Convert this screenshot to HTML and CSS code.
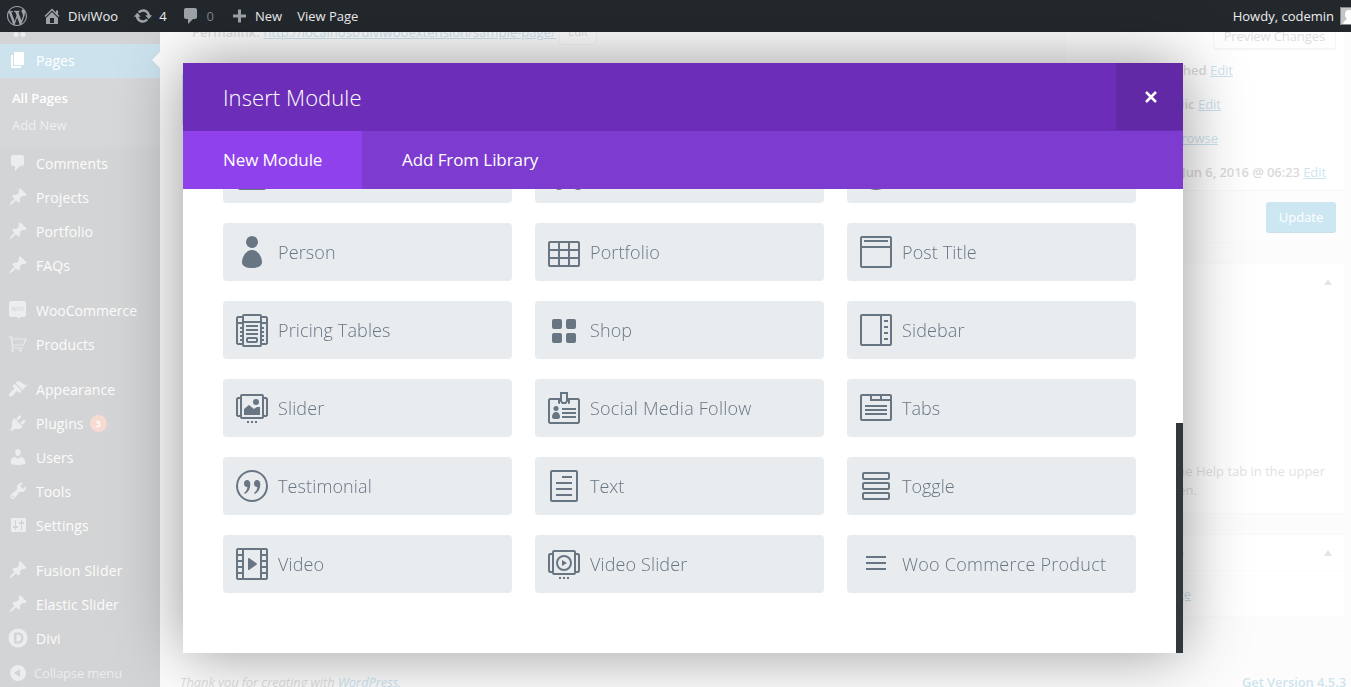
FILE: index.html
```html
<!DOCTYPE html>
<html lang="en">
<head>
<meta charset="utf-8">
<title>Edit Page - DiviWoo</title>
<link rel="stylesheet" href="styles.css">
</head>
<body>
<svg class="sprite" aria-hidden="true">
  <symbol id="wp" viewBox="0 0 20 20"><path d="M20 10c0-5.51-4.49-10-10-10C4.48 0 0 4.49 0 10c0 5.52 4.48 10 10 10 5.51 0 10-4.48 10-10zM7.78 15.37L4.37 6.22c.55-.02 1.17-.08 1.17-.08.5-.06.44-1.13-.06-1.11 0 0-1.45.11-2.37.11-.18 0-.37 0-.58-.01C4.12 2.69 6.87 1.11 10 1.11c2.33 0 4.45.87 6.05 2.34-.68-.11-1.65.39-1.65 1.58 0 .74.45 1.36.9 2.1.35.61.55 1.36.55 2.46 0 1.49-1.4 5-1.4 5l-3.03-8.37c.54-.02.82-.17.82-.17.5-.05.44-1.25-.06-1.22 0 0-1.44.12-2.38.12-.87 0-2.33-.12-2.33-.12-.5-.03-.56 1.2-.06 1.22l.92.08 1.26 3.41zM17.41 10c.24-.64.74-1.87.43-4.25.7 1.29 1.05 2.71 1.05 4.25 0 3.29-1.73 6.24-4.4 7.78.97-2.59 1.94-5.2 2.92-7.78zM6.1 18.09C3.12 16.65 1.11 13.53 1.11 10c0-1.3.23-2.48.72-3.59C3.25 10.3 4.67 14.2 6.1 18.09zm4.03-6.63l2.58 6.98c-.86.29-1.76.45-2.71.45-.79 0-1.57-.11-2.29-.33.81-2.38 1.62-4.74 2.42-7.1z"/></symbol>
  <symbol id="home" viewBox="0 0 20 20"><path d="M16 8.5l1.53 1.53-1.06 1.06L10 4.6l-6.47 6.49-1.06-1.06L10 2.5l4 4v-2h2v4zm-6-2.46l6 5.99V18H4v-5.97zM12 17v-5H8v5h4z"/></symbol>
  <symbol id="update" viewBox="0 0 20 20"><path d="M10.2 3.28c3.53 0 6.43 2.61 6.92 6h2.08l-3.5 4-3.5-4h2.32c-.45-1.97-2.21-3.45-4.32-3.45-1.45 0-2.73.71-3.54 1.78L4.95 5.66C6.23 4.2 8.11 3.28 10.2 3.28zm-.4 13.44c-3.52 0-6.43-2.61-6.92-6H.8l3.5-4c1.17 1.33 2.33 2.67 3.5 4H5.48c.45 1.97 2.21 3.45 4.32 3.45 1.45 0 2.73-.71 3.54-1.78l1.71 1.95c-1.28 1.46-3.15 2.38-5.25 2.38z"/></symbol>
  <symbol id="comment" viewBox="0 0 20 20"><path d="M5 2h9c1.1 0 2 .9 2 2v7c0 1.1-.9 2-2 2h-2l-5 5v-5H5c-1.1 0-2-.9-2-2V4c0-1.1.9-2 2-2z"/></symbol>
  <symbol id="plus" viewBox="0 0 20 20"><path d="M17 8.5v3h-5v5H9v-5H4v-3h5v-5h3v5z"/></symbol>
  <symbol id="pin" viewBox="0 0 20 20"><path d="M10.44 3.02l1.82-1.82 6.36 6.35-1.83 1.82c-1.05-.68-2.48-.57-3.41.36l-.75.75c-.92.93-1.04 2.35-.35 3.41l-1.83 1.82-2.41-2.41-2.8 2.79c-.42.42-3.38 2.71-3.8 2.29s1.86-3.39 2.28-3.81l2.79-2.79L4.1 9.36l1.83-1.82c1.05.69 2.48.57 3.4-.36l.75-.75c.93-.92 1.05-2.35.36-3.41z"/></symbol>
  <symbol id="page" viewBox="0 0 20 20"><path d="M6 15V2h10v13H6zm-1 1h8v2H3V5h2v11z"/></symbol>
  <symbol id="media" viewBox="0 0 20 20"><circle cx="8" cy="15.500" r="2.500"/><circle cx="15" cy="15.500" r="2.500"/></symbol>
  <symbol id="woo" viewBox="0 0 20 20"><path fill-rule="evenodd" d="M3 1h13a2 2 0 0 1 2 2v12a2 2 0 0 1-2 2h-4v2l-3-2H3a2 2 0 0 1-2-2V3a2 2 0 0 1 2-2z"/><path fill="none" stroke="#3c4146" stroke-width=".8" d="M4 6.500l1 4.500 1.300-4L7.600 11l1-4.500"/><ellipse cx="11" cy="8.800" rx="1.100" ry="1.900" fill="none" stroke="#3c4146" stroke-width=".8"/><ellipse cx="14.500" cy="8.800" rx="1.100" ry="1.900" fill="none" stroke="#3c4146" stroke-width=".8"/></symbol>
  <symbol id="cart" viewBox="0 0 20 20"><path fill="none" stroke="currentColor" stroke-width="1.200" d="M1 3h2.500l1 11H15M3.700 5H18l-2.500 6H4.200"/><circle cx="4.500" cy="16.500" r="1.200"/><circle cx="12.500" cy="16.500" r="1.200"/></symbol>
  <symbol id="brush" viewBox="0 0 20 20"><path d="M14.48 11.06L7.41 3.99l1.500-1.500c.5-.56 2.300-.47 3.510.32 1.210.8 1.430 1.280 2.910 2.100 1.180.64 2.450 1.260 4.450.85zm-.71.71L6.700 4.700 4.930 6.470c-.39.39-.39 1.020 0 1.410l1.060 1.060c.39.39.39 1.030 0 1.420-.6.6-1.430 1.110-2.210 1.690-.35.26-.7.53-1.010.84C1.430 14.230.4 16.080 1.400 17.070c.99 1 2.840-.03 4.180-1.360.31-.31.58-.66.85-1.020.57-.78 1.080-1.610 1.690-2.210.39-.39 1.020-.39 1.410 0l1.060 1.060c.39.39 1.020.39 1.410 0z"/></symbol>
  <symbol id="plug" viewBox="0 0 20 20"><path d="M13.11 4.36L9.870 7.600 8 5.730l3.240-3.240c.35-.34 1.050-.2 1.560.32.52.51.66 1.210.31 1.550zm-8 1.770l.91-1.120 9.010 9.010-1.190.84c-.71.71-2.630 1.160-3.820 1.160H6.140L4.900 17.260c-.59.59-1.540.59-2.120 0-.59-.58-.59-1.530 0-2.120l1.240-1.240v-3.880c0-1.130.4-3.190 1.090-3.890zm7.260 3.970l3.240-3.240c.34-.35 1.040-.21 1.550.31.52.51.66 1.210.31 1.550l-3.240 3.250z"/></symbol>
  <symbol id="user" viewBox="0 0 20 20"><path d="M10 9.250c-2.270 0-2.730-3.440-2.730-3.440C7 4.020 7.820 2 9.970 2c2.160 0 2.980 2.020 2.710 3.810 0 0-.41 3.440-2.680 3.440zm0 2.570L12.720 10c2.390 0 4.520 2.330 4.520 4.530v2.490s-3.650 1.130-7.240 1.130c-3.650 0-7.240-1.130-7.240-1.130v-2.490c0-2.250 1.940-4.480 4.470-4.480z"/></symbol>
  <symbol id="wrench" viewBox="0 0 20 20"><path d="M16.68 9.770c-1.340 1.340-3.300 1.670-4.950.99l-5.410 6.520c-.99.99-2.590.99-3.580 0s-.99-2.590 0-3.570l6.520-5.420c-.68-1.650-.35-3.610.99-4.950 1.280-1.280 3.120-1.620 4.720-1.060l-2.890 2.890 2.820 2.820 2.860-2.870c.53 1.580.18 3.390-1.080 4.650zM3.810 16.210c.4.39 1.040.39 1.430 0 .4-.4.4-1.040 0-1.430-.39-.4-1.030-.4-1.430 0-.39.39-.39 1.030 0 1.430z"/></symbol>
  <symbol id="sliders" viewBox="0 0 20 20"><path fill-rule="evenodd" d="M4 3h13a1 1 0 0 1 1 1v12a1 1 0 0 1-1 1H4a1 1 0 0 1-1-1V4a1 1 0 0 1 1-1zm3 2v6H5v2h2v2h1v-2h2v-2H8V5zm6 0v2h-2v2h2v6h1V9h2V7h-2V5z"/></symbol>
  <symbol id="divi" viewBox="0 0 20 20"><path fill-rule="evenodd" d="M10 .5a9.500 9.500 0 1 1 0 19 9.500 9.500 0 0 1 0-19zM6 4.500v11h4c3.500 0 5.500-2 5.500-5.500S13.500 4.500 10 4.500zm2.500 2H10c2 0 3 1.300 3 3.500s-1 3.500-3 3.500H8.500z"/></symbol>
  <symbol id="collapse" viewBox="0 0 20 20"><path fill-rule="evenodd" d="M10 2a8 8 0 1 1 0 16 8 8 0 0 1 0-16zM6 10l6 4V6z"/></symbol>
</svg>

<div class="wrap">
  <nav class="side">
    <div class="item first"><svg class="dash"><use href="#media"/></svg></div>
    <div class="item current"><svg class="dash"><use href="#page"/></svg>Pages</div>
    <div class="submenu"><b>All Pages</b><span>Add New</span></div>
    <div class="item"><svg class="dash"><use href="#comment"/></svg>Comments</div>
    <div class="item"><svg class="dash"><use href="#pin"/></svg>Projects</div>
    <div class="item"><svg class="dash"><use href="#pin"/></svg>Portfolio</div>
    <div class="item"><svg class="dash"><use href="#pin"/></svg>FAQs</div>
    <div class="item group exact"><svg class="dash"><use href="#woo"/></svg>WooCommerce</div>
    <div class="item"><svg class="dash"><use href="#cart"/></svg>Products</div>
    <div class="item group"><svg class="dash"><use href="#brush"/></svg>Appearance</div>
    <div class="item"><svg class="dash"><use href="#plug"/></svg>Plugins<i class="count">3</i></div>
    <div class="item"><svg class="dash"><use href="#user"/></svg>Users</div>
    <div class="item"><svg class="dash"><use href="#wrench"/></svg>Tools</div>
    <div class="item"><svg class="dash"><use href="#sliders"/></svg>Settings</div>
    <div class="item group wide"><svg class="dash"><use href="#pin"/></svg>Fusion Slider</div>
    <div class="item"><svg class="dash"><use href="#pin"/></svg>Elastic Slider</div>
    <div class="item"><svg class="dash"><use href="#divi"/></svg>Divi</div>
    <div class="item collapse"><svg class="dash"><use href="#collapse"/></svg>Collapse menu</div>
  </nav>
  <main class="main">
    <div class="columns">
      <div class="editor">
        <div class="permalink"><b>Permalink:</b> <a>http://localhost/diviwooextension/sample-page/</a> <span class="mini">Edit</span></div>
        <div class="switch"></div>
      </div>
      <div class="boxes">
        <section class="box publish">
          <div class="preview"><span class="button">Preview Changes</span></div>
          <p class="row status">Status: <b>Published</b> <a>Edit</a></p>
          <p class="row visibility">Visibility: <b>Public</b> <a>Edit</a></p>
          <p class="row revisions">Revisions: <b>4</b> <a>Browse</a></p>
          <p class="row date">Published: <b>Jun 6, 2016 @ 06:23</b> <a>Edit</a></p>
          <div class="actions"><span class="primary">Update</span></div>
        </section>
        <section class="box attributes">
          <h2><span>Page Attributes</span><i></i></h2>
          <p class="help">Need help? Use the Help tab in the upper<br>right of your screen.</p>
        </section>
        <section class="box featured">
          <h2><span>Featured Image</span><i></i></h2>
          <p class="image"><a>Set featured image</a></p>
        </section>
      </div>
    </div>
    <footer><em>Thank you for creating with <a>WordPress</a>.</em><b>Get Version 4.5.3</b></footer>
  </main>
</div>
<div class="overlay"></div>

<header class="adminbar">
  <svg class="dash a-wp"><use href="#wp"/></svg>
  <svg class="dash a-home"><use href="#home"/></svg><span class="a-site">DiviWoo</span>
  <svg class="dash a-update"><use href="#update"/></svg><span class="a-updates">4</span>
  <svg class="dash a-comment"><use href="#comment"/></svg><span class="a-comments">0</span>
  <svg class="dash a-plus"><use href="#plus"/></svg><span class="a-new">New</span>
  <span>View Page</span>
  <span class="howdy">Howdy, codemin</span>
  <svg class="avatar" viewBox="0 0 18 18"><path fill="#c5c5c5" d="M0 0h18v18H0z"/><path fill="#fff" d="M9 3c3 0 4 2 4 4.500S11.500 11 11 12c1 1 4 1 5 5H3c.5-3 3-4 4-5-1-1-2-2-2-4.500S6 3 9 3z"/><path fill="none" stroke="#82878c" d="M.5.5h17v17H.5z"/></svg>
</header>

<div class="modal">
  <div class="head"><h1>Insert Module</h1><div class="close"><svg viewBox="0 0 12 12"><path d="M1 1l10 10M11 1L1 11"/></svg></div></div>
  <div class="tabs"><span class="active">New Module</span><span>Add From Library</span></div>
  <div class="body">
    <div class="grid">
      <div class="card"><svg class="ico"><rect x="3" y="3" width="26" height="28" rx="1"/></svg></div>
      <div class="card"><svg class="ico"><circle cx="11" cy="28" r="3"/><circle cx="30" cy="28" r="3"/></svg></div>
      <div class="card"><svg class="ico"><circle cx="16" cy="16" r="15"/></svg></div>

      <div class="card"><svg class="ico solid"><circle cx="16" cy="6" r="6"/><path d="M16 14c6 0 10 7 10 12 0 4-4 6-10 6S6 30 6 26c0-5 4-12 10-12z"/></svg>Person</div>
      <div class="card"><svg class="ico"><rect x="1" y="6" width="30" height="24" rx="1"/><path d="M11 6v24M21 6v24M1 14h30M1 22h30"/></svg>Portfolio</div>
      <div class="card"><svg class="ico"><rect x="1" y="1" width="30" height="30" rx="1"/><path d="M4 5h24M1 11h30"/></svg>Post Title</div>

      <div class="card"><svg class="ico"><rect x="7" y="1" width="18" height="31" rx="1"/><path d="M7 8h18M10 12h12M10 16h12M10 20h12M7 3H2L1 4v25l1 1h5M25 3h5l1 1v25l-1 1h-5M1 9h6M25 9h6M4 14h3M4 18h3M4 22h3M4 26h3M25 14h3M25 18h3M25 22h3M25 26h3"/><rect x="11" y="24" width="10" height="4" rx="1"/></svg>Pricing Tables</div>
      <div class="card"><svg class="ico solid"><rect x="4" y="5" width="10" height="10" rx="2"/><rect x="18" y="5" width="10" height="10" rx="2"/><rect x="4" y="19" width="10" height="10" rx="2"/><rect x="18" y="19" width="10" height="10" rx="2"/></svg>Shop</div>
      <div class="card"><svg class="ico"><rect x="1" y="1" width="30" height="30" rx="1"/><path d="M21 1v30M24 7h4M24 13h4M24 19h4M24 25h4"/></svg>Sidebar</div>

      <div class="card"><svg class="ico"><rect x="5" y="3" width="22" height="23" rx="1"/><path d="M5 6H2L1 7v16l1 1h3M27 6h3l1 1v16l-1 1h-3M11 30h2M15 30h2M19 30h2"/><path class="fill" d="M8 23v-6l5-4 5 4 3-2 3 0v8z"/><circle class="fill" cx="20" cy="10" r="3"/></svg>Slider</div>
      <div class="card loose"><svg class="ico"><path d="M12 7H2L1 8v22l1 1h28l1-1V8l-1-1H20M14 17h14M14 21h14M14 25h14"/><path d="M13 1h6v8l-1.500 2h-3L13 9z"/><path class="fill" d="M10 7h2v5h-1l-1-1zM22 7h-2v5h1l1-1z"/><circle class="fill" cx="8" cy="16.500" r="2.500"/><path class="fill" d="M8 20c2.500 0 4 2 4 5 0 1.500-1 2-4 2s-4-.5-4-2c0-3 1.500-5 4-5z"/></svg>Social Media Follow</div>
      <div class="card exact"><svg class="ico"><rect x="1" y="3" width="30" height="25" rx="1"/><path d="M11 3v5h20M21 3v5M5 14h22M5 18h22M5 22h22"/></svg>Tabs</div>

      <div class="card"><svg class="ico"><circle cx="16" cy="16" r="15"/><path class="fill" d="M11 10c2.200 0 3.300 1.600 3.300 4.500 0 4.500-2 7.500-5.300 9.500l-1-1c2-1.500 3.200-3.300 3.400-6-2 .2-3.400-1.200-3.400-3.500 0-2 1.200-3.500 3-3.500zM21 10c2.200 0 3.300 1.600 3.300 4.500 0 4.500-2 7.500-5.300 9.500l-1-1c2-1.500 3.200-3.300 3.400-6-2 .2-3.400-1.200-3.400-3.500 0-2 1.200-3.500 3-3.500z"/></svg>Testimonial</div>
      <div class="card exact"><svg class="ico"><rect x="3" y="1" width="26" height="30" rx="1"/><path d="M14 7h10M8 13h16M8 19h16M8 25h16"/></svg>Text</div>
      <div class="card exact"><svg class="ico"><rect x="3" y="3" width="26" height="6" rx="1"/><rect x="3" y="13" width="26" height="6" rx="1"/><rect x="3" y="23" width="26" height="6" rx="1"/></svg>Toggle</div>

      <div class="card"><svg class="ico"><rect x="1" y="1" width="30" height="30" rx="1"/><path d="M7 1v30M25 1v30M1 7h6M1 13h6M1 19h6M1 25h6M25 7h6M25 13h6M25 19h6M25 25h6"/><path class="fill" d="M12 10.500c0-.6.6-.7 1-.4l7.500 5.200c.6.4.6 1 0 1.400L13 21.900c-.4.300-1 .2-1-.4z"/></svg>Video</div>
      <div class="card"><svg class="ico"><rect x="5" y="3" width="22" height="23" rx="1"/><path d="M5 6H2L1 7v16l1 1h3M27 6h3l1 1v16l-1 1h-3M11 30h2M15 30h2M19 30h2"/><circle cx="16" cy="15" r="7"/><path class="fill" d="M14 12l5 3-5 3z"/></svg>Video Slider</div>
      <div class="card loose"><svg class="ico"><path d="M6 9h20M6 15h20M6 21h20"/></svg>Woo Commerce Product</div>
    </div>
    <div class="thumb"></div>
  </div>
</div>
</body>
</html>
```

FILE: styles.css
```css
* { box-sizing: border-box; }
html, body { height: 100%; overflow: hidden; }
body { margin: 0; background: #f1f1f1; color: #444; font: 13px/19px "Open Sans", sans-serif; }
.sprite { position: absolute; width: 0; height: 0; }
h1, h2, p { margin: 0; }
b { font-weight: 600; }
.dash { width: 20px; height: 20px; flex: none; fill: currentColor; overflow: visible; }

/* Page behind the modal */
.wrap { display: flex; height: 687px; padding-top: 32px; overflow: hidden; }
.side { width: 160px; flex: none; background: #23282d; }
.item { display: flex; align-items: center; height: 34px; padding: 0 0 2px 8px; gap: 8px; font-size: 14px; letter-spacing: .1px; color: #eee; }
.item .dash { color: #9ea3a8; }
.item.first { height: 12px; align-items: flex-end; padding-bottom: 5px; overflow: hidden; }
.item.group { margin-top: 11px; }
.item.exact { letter-spacing: 0; }
.item.wide { letter-spacing: .25px; }
.item.current { background: #0073aa; color: #fff; }
.item.current .dash { color: #fff; }
.item.current::after { content: ""; margin-left: auto; border: 8px solid transparent; border-right-color: #f1f1f1; border-left: 0; }
.item.collapse { padding-bottom: 0; font-size: 13px; letter-spacing: -.15px; gap: 6px; color: #9ea3a8; }
.submenu { display: flex; flex-direction: column; height: 69px; padding: 7px 12px 8px; background: #32373c; line-height: 27px; color: #b4b9be; }
.submenu b { color: #fff; }
.count { width: 17px; margin-left: -2px; border-radius: 9px; background: #d54e21; color: #fff; font: 600 9px/17px "Open Sans", sans-serif; text-align: center; }
.main { display: flex; flex-direction: column; justify-content: space-between; flex: 1; padding: 0 5px 0 20px; }
.columns { display: flex; justify-content: space-between; }
a { color: #0073aa; text-decoration: underline; }
.editor { padding: 0 0 0 2px; }
.permalink { height: 42px; margin-top: -9px; padding: 0 10px; line-height: 19px; letter-spacing: .04px; white-space: nowrap; }
.permalink b { color: #666; }
.mini { display: inline-block; height: 22px; padding: 0 8px; border: 1px solid #ccc; border-radius: 3px; background: #f7f7f7; font-size: 11px; line-height: 16px; vertical-align: top; }
.switch { width: 200px; height: 51px; margin-top: 9px; background: #00a07e; }
.boxes { width: 281px; }
.box { border: 1px solid #e5e5e5; background: #fff; }
.publish { height: 211px; border-top: 0; }
.preview { display: flex; justify-content: flex-end; height: 21px; padding-right: 9px; }
.button { height: 28px; margin-top: -11px; padding: 0 10px; border: 1px solid #ccc; border-radius: 3px; background: #f7f7f7; box-shadow: 0 1px 0 #ccc; line-height: 28px; letter-spacing: -.1px; color: #555; white-space: nowrap; }
.row { height: 34px; line-height: 34px; text-align: right; white-space: nowrap; }
.status { width: 167px; }
.visibility { width: 155px; }
.revisions { width: 152px; }
.date { width: 260px; letter-spacing: -.08px; }
.actions { display: flex; justify-content: flex-end; height: 52px; margin-top: 1px; padding: 11px 9px 0; border-top: 1px solid #ddd; background: #f5f5f5; }
.primary { width: 70px; height: 30px; border-radius: 3px; background: #0085ba; box-shadow: 0 1px 0 #006799; color: #fff; line-height: 30px; text-align: center; }
.box h2 { display: flex; align-items: center; justify-content: space-between; height: 36px; padding: 0 13px 0 12px; border-bottom: 1px solid #eee; font-size: 14px; line-height: 19px; font-weight: 600; }
.box h2 i { border: 4px solid transparent; border-top: 0; border-bottom: 6px solid #72777c; }
.attributes { height: 251px; margin-top: 20px; }
.help { width: fit-content; margin: 0 20px 0 auto; padding-top: 162px; white-space: nowrap; color: #666; }
.featured { height: 83px; margin-top: 20px; }
.image { width: 125px; padding-top: 14px; text-align: right; white-space: nowrap; }
footer { display: flex; justify-content: space-between; height: 14px; line-height: 19px; letter-spacing: -.09px; color: #555; }
footer a { color: #0073aa; }
footer b { color: #0073aa; }
.overlay { position: fixed; inset: 0; background: rgba(255, 255, 255, .8); }

/* Admin bar */
.adminbar { position: fixed; top: 0; left: 0; right: 0; display: flex; align-items: center; height: 32px; padding-left: 7px; overflow: hidden; background: #23282d; color: #eee; white-space: nowrap; }
.adminbar .dash { color: #9ea3a8; }
.a-home { margin-left: 15px; }
.a-site { margin-left: 6px; }
.a-update { margin-left: 15px; }
.a-updates { margin-left: 6px; }
.a-comment { margin-left: 14px; }
.a-comments { margin-left: 6px; color: #7d8287; }
.a-plus { margin-left: 15px; }
.a-new { margin: 0 15px 0 6px; }
.howdy { margin-left: auto; }
.avatar { width: 18px; height: 18px; margin: 0 -7px 0 6px; flex: none; }

/* Insert Module dialog */
.modal { position: fixed; left: 183px; top: 63px; display: flex; flex-direction: column; width: 1000px; height: 590px; background: #fff; box-shadow: 0 0 60px rgba(0, 0, 0, .4); }
.head { display: flex; align-items: flex-start; justify-content: space-between; height: 68px; background: #6c2eb9; }
.head h1 { padding-left: 40px; font-size: 22px; font-weight: 300; letter-spacing: .08px; line-height: 69px; color: #fff; }
.close { display: flex; align-items: center; justify-content: center; width: 67px; height: 67px; padding: 1px 0 0 2px; background: #6129a6; }
.close svg { width: 12px; height: 12px; fill: none; stroke: #fff; stroke-width: 2.5; }
.tabs { display: flex; height: 58px; background: #7e3bd0; color: #fff; font-size: 17px; line-height: 58px; letter-spacing: -.08px; white-space: nowrap; }
.tabs span { padding: 0 40px; }
.tabs .active { width: 179px; background: #8f42ec; }
.body { position: relative; flex: 1; overflow: hidden; }
.grid { display: grid; grid-template-columns: repeat(3, 289px); grid-auto-rows: 58px; gap: 20px 23px; margin: -44px 0 0 40px; }
.card { display: flex; align-items: center; gap: 10px; padding-left: 13px; border-radius: 4px; background: #e8ecef; color: #687684; font-size: 18px; font-weight: 300; letter-spacing: .12px; white-space: nowrap; }
.card.loose { letter-spacing: .24px; }
.card.exact { letter-spacing: 0; }
.ico { width: 32px; height: 32px; flex: none; overflow: visible; fill: none; stroke: #687684; stroke-width: 2; }
.ico.solid, .ico .fill { fill: #687684; stroke: none; }
.thumb { position: absolute; right: 0; bottom: 0; width: 7px; height: 230px; background: #32373c; }
```
